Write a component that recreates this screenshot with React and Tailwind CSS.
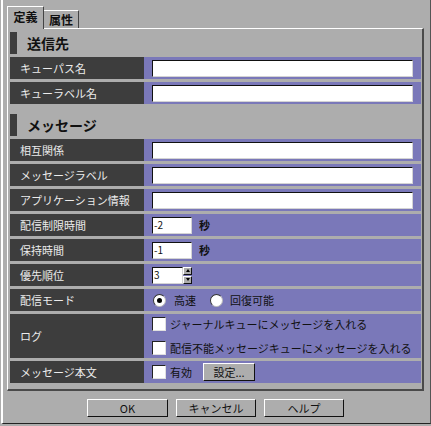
import React from "react";

const Row = ({ label, children, tall }) => (
  <div className={`flex ${tall ? "h-[44px]" : "h-[22px]"}`}>
    <div className="w-[134px] bg-[#3d3d3d] text-[#ececec] flex items-center pl-[10px]">
      {label}
    </div>
    <div className="flex-1 bg-[#7a78b9] flex items-center px-[8px]">
      {children}
    </div>
  </div>
);

const Field = () => (
  <div className="flex-1 h-[17px] bg-white border border-t-[#111] border-l-[#111] border-r-[#d4d4d4] border-b-[#d4d4d4]" />
);

const Small = ({ value, w = "w-[40px]" }) => (
  <div
    className={`${w} h-[17px] bg-white border border-t-[#111] border-l-[#111] border-r-[#d4d4d4] border-b-[#d4d4d4] flex items-center pl-[1px] text-[10px] leading-none`}
  >
    {value}
  </div>
);

const Check = () => (
  <div className="w-[14px] h-[14px] bg-white border border-t-[#222] border-l-[#222] border-r-[#e0e0e0] border-b-[#e0e0e0] shrink-0" />
);

const Radio = ({ on }) => (
  <div className="w-[13px] h-[13px] rounded-full bg-white border border-t-[#333] border-l-[#333] border-r-[#bbb] border-b-[#bbb] flex items-center justify-center shrink-0">
    {on && <div className="w-[5px] h-[5px] rounded-full bg-black" />}
  </div>
);

const Header = ({ children, className = "" }) => (
  <div className={`flex items-center h-[22px] gap-[10px] ${className}`}>
    <div className="w-[7px] h-full bg-[#3d3d3d]" />
    <span className="font-bold text-[14px] leading-none">{children}</span>
  </div>
);

const Btn = ({ children, className = "" }) => (
  <div
    className={`h-[18px] bg-[#adadad] border border-t-white border-l-white border-r-[#111] border-b-[#111] flex items-center justify-center text-[11px] leading-none ${className}`}
  >
    {children}
  </div>
);

export default function App() {
  return (
    <div className="w-[431px] h-[426px] bg-[#adadad] overflow-hidden text-[11px] text-[#111] font-['Noto_Sans_CJK_JP',sans-serif]">
      <div className="ml-[1px] h-[424px] border-l-2 border-l-white border-b border-b-[#222] border-r border-r-[#555] pl-[4px] pt-[6px]">
        {/* tabs */}
        <div className="flex items-end h-[22px]">
          <div className="relative z-10 w-[37px] h-[23px] -mb-px bg-[#adadad] border-t border-l border-t-white border-l-white border-r border-r-[#444] flex items-start justify-center pt-[4px] font-bold text-[12px] leading-none">
            定義
          </div>
          <div className="w-[35px] h-[18px] border-t border-t-white border-r border-r-[#444] flex items-start justify-center pt-[3px] font-bold text-[12px] leading-none">
            属性
          </div>
        </div>

        {/* panel */}
        <div className="w-[417px] h-[363px] border-t border-l border-t-white border-l-white border-r-2 border-b-2 border-r-[#4a4a4a] border-b-[#4a4a4a] pl-[2px] pr-[1px] pt-[3px] flex flex-col gap-[3px]">
          <Header>送信先</Header>
          <Row label="キューパス名">
            <Field />
          </Row>
          <Row label="キューラベル名">
            <Field />
          </Row>

          <Header className="mt-[7px]">メッセージ</Header>
          <Row label="相互関係">
            <Field />
          </Row>
          <Row label="メッセージラベル">
            <Field />
          </Row>
          <Row label="アプリケーション情報">
            <Field />
          </Row>
          <Row label="配信制限時間">
            <Small value="-2" />
            <span className="ml-[7px] font-bold">秒</span>
          </Row>
          <Row label="保持時間">
            <Small value="-1" />
            <span className="ml-[7px] font-bold">秒</span>
          </Row>
          <Row label="優先順位">
            <Small value="3" w="w-[31px]" />
            <div className="w-[9px] h-[17px] flex flex-col gap-px">
              <div className="flex-1 bg-[#adadad] border border-t-white border-l-white border-r-[#111] border-b-[#111] flex items-center justify-center">
                <div className="w-0 h-0 border-l-[2px] border-r-[2px] border-b-[3px] border-l-transparent border-r-transparent border-b-black" />
              </div>
              <div className="flex-1 bg-[#adadad] border border-t-white border-l-white border-r-[#111] border-b-[#111] flex items-center justify-center">
                <div className="w-0 h-0 border-l-[2px] border-r-[2px] border-t-[3px] border-l-transparent border-r-transparent border-t-black" />
              </div>
            </div>
          </Row>
          <Row label="配信モード">
            <div className="pl-px flex items-center">
              <Radio on />
              <span className="ml-[8px]">高速</span>
              <div className="ml-[14px]">
                <Radio />
              </div>
              <span className="ml-[7px]">回復可能</span>
            </div>
          </Row>
          <Row label="ログ" tall>
            <div className="flex flex-col gap-[10px]">
              <div className="flex items-center gap-[4px] h-[14px]">
                <Check />
                <span className="leading-none">ジャーナルキューにメッセージを入れる</span>
              </div>
              <div className="flex items-center gap-[4px] h-[14px]">
                <Check />
                <span className="leading-none">配信不能メッセージキューにメッセージを入れる</span>
              </div>
            </div>
          </Row>
          <Row label="メッセージ本文">
            <Check />
            <span className="ml-[4px]">有効</span>
            <Btn className="ml-[11px] w-[52px] h-[17px]">設定...</Btn>
          </Row>
        </div>

        {/* buttons */}
        <div className="flex justify-center gap-[8px] mt-[8px] pr-[6px]">
          <Btn className="w-[81px]">OK</Btn>
          <Btn className="w-[80px]">キャンセル</Btn>
          <Btn className="w-[80px]">ヘルプ</Btn>
        </div>
      </div>
    </div>
  );
}
